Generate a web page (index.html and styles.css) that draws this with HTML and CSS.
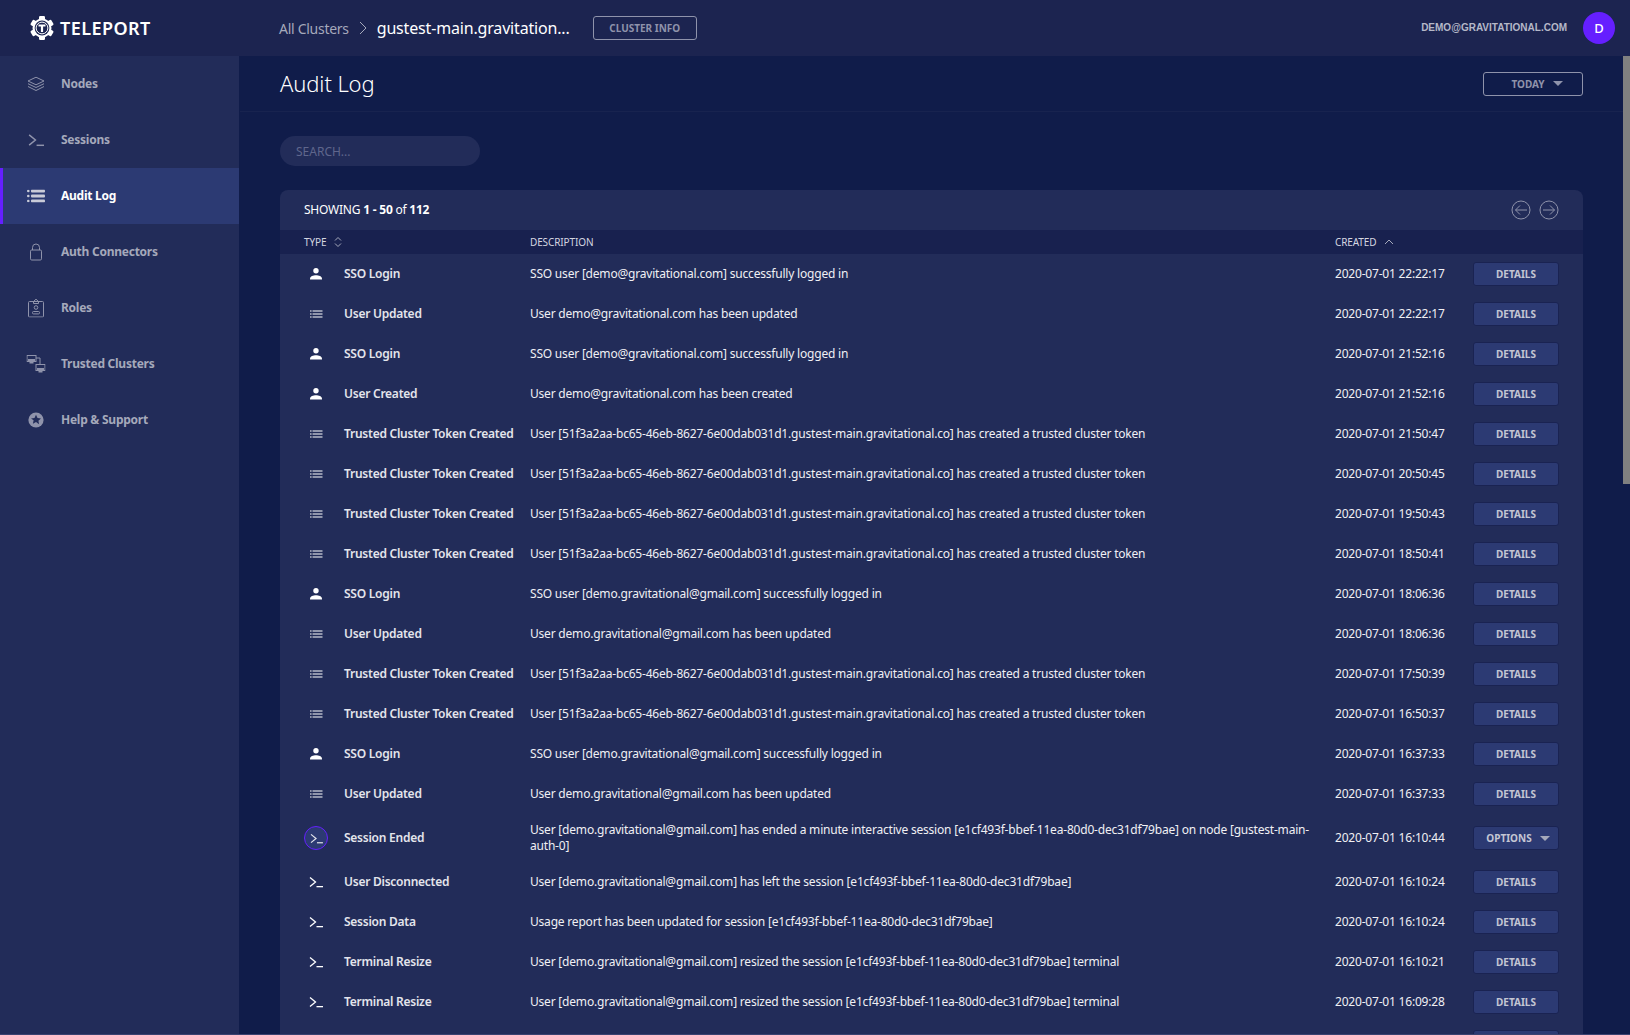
FILE: index.html
```html
<!DOCTYPE html>
<html lang="en">
<head>
<meta charset="utf-8">
<title>Audit Log</title>
<link rel="stylesheet" href="styles.css">
</head>
<body>
<svg class="defs" width="0" height="0" aria-hidden="true">
  <symbol id="i-user" viewBox="0 0 14 14"><circle cx="7" cy="3.8" r="2.7" fill="currentColor"/><path d="M1 12.500v-1C1 9.400 4.400 8.200 7 8.200s6 1.200 6 3.300v1z" fill="currentColor"/></symbol>
  <symbol id="i-list" viewBox="0 0 14 14"><g fill="currentColor"><rect x="1" y="3.500" width="1.600" height="1"/><rect x="3.500" y="3.500" width="10" height="1"/><rect x="1" y="6.500" width="1.600" height="1"/><rect x="3.500" y="6.500" width="10" height="1"/><rect x="1" y="9.500" width="1.600" height="1"/><rect x="3.500" y="9.500" width="10" height="1"/></g></symbol>
  <symbol id="i-term" viewBox="0 0 14 12"><path d="M1 1.500 L6.500 6 L1 10.500" fill="none" stroke="currentColor" stroke-width="1.300"/><rect x="7.500" y="10" width="6.500" height="1.300" fill="currentColor"/></symbol>
</svg>

<header class="topbar">
  <div class="brand">
    <svg class="logo" viewBox="0 0 24 24" width="24" height="24">
      <g fill="#fff">
        <circle cx="12" cy="12" r="9.500"/>
        <rect x="9" y="0" width="6" height="24" rx="1.200"/>
        <rect x="9" y="0" width="6" height="24" rx="1.200" transform="rotate(60 12 12)"/>
        <rect x="9" y="0" width="6" height="24" rx="1.200" transform="rotate(120 12 12)"/>
      </g>
      <circle cx="12" cy="12" r="7.400" fill="#1c2450"/>
      <circle cx="12" cy="12" r="5.900" fill="none" stroke="#fff" stroke-width="1"/>
      <path fill="#fff" d="M8.500 8.500h7v2h-2.400V16h-2.200v-5.500H8.500z"/>
    </svg>
    <span class="brand-name">TELEPORT</span>
  </div>
  <div class="crumbs">
    <span class="crumb-root">All Clusters</span>
    <svg class="crumb-sep" viewBox="0 0 8 14" width="8" height="14"><path d="M1 1l6 6-6 6" fill="none" stroke="currentColor" stroke-width="1"/></svg>
    <span class="crumb-current">gustest-main.gravitation...</span>
    <button class="btn-outline btn-cluster">CLUSTER INFO</button>
  </div>
  <div class="account">
    <span class="account-mail">DEMO@GRAVITATIONAL.COM</span>
    <span class="avatar">D</span>
  </div>
</header>

<div class="shell">
  <nav class="sidebar">
    <a class="nav-item"><svg class="nav-icon" viewBox="0 0 18 15" width="18" height="15"><g fill="none" stroke="currentColor" stroke-width="1"><path d="M9 .7l8 3.800-8 3.800-8-3.800z"/><path d="M1 7.200l8 3.800 8-3.800"/><path d="M1 10l8 4 8-4"/></g></svg><span>Nodes</span></a>
    <a class="nav-item"><svg class="nav-icon" viewBox="0 0 14 12" width="16" height="14"><use href="#i-term"/></svg><span>Sessions</span></a>
    <a class="nav-item active"><svg class="nav-icon" viewBox="0 0 18 13" width="18" height="13"><g fill="currentColor"><circle cx="1.300" cy="1.500" r="1.300"/><rect x="4" y="0" width="14" height="3" rx="1"/><circle cx="1.300" cy="6.500" r="1.300"/><rect x="4" y="5" width="14" height="3" rx="1"/><circle cx="1.300" cy="11.500" r="1.300"/><rect x="4" y="10" width="14" height="3" rx="1"/></g></svg><span>Audit Log</span></a>
    <a class="nav-item"><svg class="nav-icon" viewBox="0 0 14 18" width="14" height="18"><g fill="none" stroke="currentColor" stroke-width="1"><rect x="1.500" y="7" width="11" height="10" rx="1.200"/><path d="M3.500 7V4.500a3.500 3.500 0 0 1 7 0V7"/></g></svg><span>Auth Connectors</span></a>
    <a class="nav-item"><svg class="nav-icon" viewBox="0 0 16 19" width="16" height="19"><g fill="none" stroke="currentColor" stroke-width="1"><rect x=".5" y="3" width="15" height="15.500" rx="1"/><path d="M5.500 3L8 .7 10.500 3v2h-5z"/><circle cx="8" cy="9" r="1.800"/><rect x="4.500" y="13" width="7" height="2.400" rx="1"/></g></svg><span>Roles</span></a>
    <a class="nav-item"><svg class="nav-icon" viewBox="0 0 19 18" width="19" height="18"><g fill="none" stroke="currentColor" stroke-width="1"><rect x=".5" y=".5" width="9" height="6"/><rect x="9.500" y="9.500" width="9" height="6"/><path d="M9.500 3h4v6.500"/></g><g fill="currentColor"><rect x="1.500" y="4" width="7" height="2.500"/><rect x="3" y="7" width="4" height="1.500"/><rect x="10.500" y="13" width="7" height="2.500"/><rect x="12" y="16" width="4" height="1.500"/></g></svg><span>Trusted Clusters</span></a>
    <a class="nav-item"><svg class="nav-icon" viewBox="0 0 16 16" width="16" height="16"><circle cx="8" cy="8" r="7.600" fill="currentColor"/><path d="M8 2.800l1.500 3.200 3.500.4-2.600 2.400.7 3.500L8 10.100l-3.100 1.700.7-3.500L3 6.400l3.500-.4z" fill="#222c59"/></svg><span>Help &amp; Support</span></a>
  </nav>

  <main class="content">
    <div class="page-head">
      <h1>Audit Log</h1>
      <button class="btn-outline btn-range">TODAY<span class="caret"></span></button>
    </div>
    <div class="page-body">
      <div class="search">SEARCH...</div>
      <section class="panel">
        <div class="panel-head">
          <div>SHOWING <b>1 - 50</b> of <b>112</b></div>
          <div class="pager">
            <svg viewBox="0 0 20 20" width="20" height="20"><g fill="none" stroke="currentColor"><circle cx="10" cy="10" r="9"/><path d="M16 10H4.500M9 5.500L4.500 10 9 14.500"/></g></svg>
            <svg viewBox="0 0 20 20" width="20" height="20"><g fill="none" stroke="currentColor"><circle cx="10" cy="10" r="9"/><path d="M4 10h11.500M11 5.500l4.500 4.500-4.500 4.500"/></g></svg>
          </div>
        </div>
        <div class="row row-head">
          <div class="col-type"><span>TYPE</span><svg class="sort" viewBox="0 0 8 12" width="8" height="12"><path d="M1 4.500L4 1.500l3 3M1 7.500l3 3 3-3" fill="none" stroke="currentColor"/></svg></div>
          <div class="col-desc">DESCRIPTION</div>
          <div class="col-date"><span>CREATED</span><svg class="sort-up" viewBox="0 0 10 6" width="10" height="6"><path d="M1 5l4-4 4 4" fill="none" stroke="currentColor"/></svg></div>
        </div>
        <div class="row"><div class="col-type"><svg class="ev"><use href="#i-user"/></svg><b>SSO Login</b></div><div class="col-desc">SSO user [demo@gravitational.com] successfully logged in</div><div class="col-date">2020-07-01 22:22:17</div><button class="btn-details">DETAILS</button></div>
        <div class="row"><div class="col-type"><svg class="ev"><use href="#i-list"/></svg><b>User Updated</b></div><div class="col-desc">User demo@gravitational.com has been updated</div><div class="col-date">2020-07-01 22:22:17</div><button class="btn-details">DETAILS</button></div>
        <div class="row"><div class="col-type"><svg class="ev"><use href="#i-user"/></svg><b>SSO Login</b></div><div class="col-desc">SSO user [demo@gravitational.com] successfully logged in</div><div class="col-date">2020-07-01 21:52:16</div><button class="btn-details">DETAILS</button></div>
        <div class="row"><div class="col-type"><svg class="ev"><use href="#i-user"/></svg><b>User Created</b></div><div class="col-desc">User demo@gravitational.com has been created</div><div class="col-date">2020-07-01 21:52:16</div><button class="btn-details">DETAILS</button></div>
        <div class="row"><div class="col-type"><svg class="ev"><use href="#i-list"/></svg><b>Trusted Cluster Token Created</b></div><div class="col-desc">User [51f3a2aa-bc65-46eb-8627-6e00dab031d1.gustest-main.gravitational.co] has created a trusted cluster token</div><div class="col-date">2020-07-01 21:50:47</div><button class="btn-details">DETAILS</button></div>
        <div class="row"><div class="col-type"><svg class="ev"><use href="#i-list"/></svg><b>Trusted Cluster Token Created</b></div><div class="col-desc">User [51f3a2aa-bc65-46eb-8627-6e00dab031d1.gustest-main.gravitational.co] has created a trusted cluster token</div><div class="col-date">2020-07-01 20:50:45</div><button class="btn-details">DETAILS</button></div>
        <div class="row"><div class="col-type"><svg class="ev"><use href="#i-list"/></svg><b>Trusted Cluster Token Created</b></div><div class="col-desc">User [51f3a2aa-bc65-46eb-8627-6e00dab031d1.gustest-main.gravitational.co] has created a trusted cluster token</div><div class="col-date">2020-07-01 19:50:43</div><button class="btn-details">DETAILS</button></div>
        <div class="row"><div class="col-type"><svg class="ev"><use href="#i-list"/></svg><b>Trusted Cluster Token Created</b></div><div class="col-desc">User [51f3a2aa-bc65-46eb-8627-6e00dab031d1.gustest-main.gravitational.co] has created a trusted cluster token</div><div class="col-date">2020-07-01 18:50:41</div><button class="btn-details">DETAILS</button></div>
        <div class="row"><div class="col-type"><svg class="ev"><use href="#i-user"/></svg><b>SSO Login</b></div><div class="col-desc">SSO user [demo.gravitational@gmail.com] successfully logged in</div><div class="col-date">2020-07-01 18:06:36</div><button class="btn-details">DETAILS</button></div>
        <div class="row"><div class="col-type"><svg class="ev"><use href="#i-list"/></svg><b>User Updated</b></div><div class="col-desc">User demo.gravitational@gmail.com has been updated</div><div class="col-date">2020-07-01 18:06:36</div><button class="btn-details">DETAILS</button></div>
        <div class="row"><div class="col-type"><svg class="ev"><use href="#i-list"/></svg><b>Trusted Cluster Token Created</b></div><div class="col-desc">User [51f3a2aa-bc65-46eb-8627-6e00dab031d1.gustest-main.gravitational.co] has created a trusted cluster token</div><div class="col-date">2020-07-01 17:50:39</div><button class="btn-details">DETAILS</button></div>
        <div class="row"><div class="col-type"><svg class="ev"><use href="#i-list"/></svg><b>Trusted Cluster Token Created</b></div><div class="col-desc">User [51f3a2aa-bc65-46eb-8627-6e00dab031d1.gustest-main.gravitational.co] has created a trusted cluster token</div><div class="col-date">2020-07-01 16:50:37</div><button class="btn-details">DETAILS</button></div>
        <div class="row"><div class="col-type"><svg class="ev"><use href="#i-user"/></svg><b>SSO Login</b></div><div class="col-desc">SSO user [demo.gravitational@gmail.com] successfully logged in</div><div class="col-date">2020-07-01 16:37:33</div><button class="btn-details">DETAILS</button></div>
        <div class="row"><div class="col-type"><svg class="ev"><use href="#i-list"/></svg><b>User Updated</b></div><div class="col-desc">User demo.gravitational@gmail.com has been updated</div><div class="col-date">2020-07-01 16:37:33</div><button class="btn-details">DETAILS</button></div>
        <div class="row row-tall"><div class="col-type"><span class="ev-ring"><svg class="ev-small"><use href="#i-term"/></svg></span><b>Session Ended</b></div><div class="col-desc">User [demo.gravitational@gmail.com] has ended a minute interactive session [e1cf493f-bbef-11ea-80d0-dec31df79bae] on node [gustest-main-auth-0]</div><div class="col-date">2020-07-01 16:10:44</div><button class="btn-details btn-options">OPTIONS<span class="caret"></span></button></div>
        <div class="row"><div class="col-type"><svg class="ev"><use href="#i-term"/></svg><b>User Disconnected</b></div><div class="col-desc">User [demo.gravitational@gmail.com] has left the session [e1cf493f-bbef-11ea-80d0-dec31df79bae]</div><div class="col-date">2020-07-01 16:10:24</div><button class="btn-details">DETAILS</button></div>
        <div class="row"><div class="col-type"><svg class="ev"><use href="#i-term"/></svg><b>Session Data</b></div><div class="col-desc">Usage report has been updated for session [e1cf493f-bbef-11ea-80d0-dec31df79bae]</div><div class="col-date">2020-07-01 16:10:24</div><button class="btn-details">DETAILS</button></div>
        <div class="row"><div class="col-type"><svg class="ev"><use href="#i-term"/></svg><b>Terminal Resize</b></div><div class="col-desc">User [demo.gravitational@gmail.com] resized the session [e1cf493f-bbef-11ea-80d0-dec31df79bae] terminal</div><div class="col-date">2020-07-01 16:10:21</div><button class="btn-details">DETAILS</button></div>
        <div class="row"><div class="col-type"><svg class="ev"><use href="#i-term"/></svg><b>Terminal Resize</b></div><div class="col-desc">User [demo.gravitational@gmail.com] resized the session [e1cf493f-bbef-11ea-80d0-dec31df79bae] terminal</div><div class="col-date">2020-07-01 16:09:28</div><button class="btn-details">DETAILS</button></div>
        <div class="row"><div class="col-type"></div><div class="col-desc"></div><div class="col-date"></div><button class="btn-details" aria-label="Details"></button></div>
      </section>
    </div>
  </main>
  <div class="scrollbar"><div class="thumb"></div></div>
</div>
</body>
</html>
```

FILE: styles.css
```css
* { box-sizing: border-box; }
html, body { margin: 0; height: 100%; overflow: hidden; }
body {
  background: #101c4a;
  color: #fff;
  font-family: "Noto Sans", "Open Sans", sans-serif;
  font-size: 12px;
}
body::after { content: ""; position: fixed; left: 0; right: 0; bottom: 0; height: 1px; background: #3a4270; }
.defs { position: absolute; }
button { font-family: inherit; cursor: pointer; }

.topbar { height: 56px; background: #1c2450; display: flex; align-items: center; }
.brand { width: 279px; padding-left: 30px; display: flex; align-items: center; gap: 6px; flex: none; }
.brand-name { font-size: 18px; font-weight: 600; letter-spacing: .45px; }
.crumbs { display: flex; align-items: center; flex: 1; }
.crumb-root { font-size: 14px; color: #a5a9bb; letter-spacing: -.28px; }
.crumb-sep { color: #a5a9bb; margin: 0 10px; }
.crumb-current { font-size: 16px; color: #fff; width: 194px; white-space: nowrap; letter-spacing: -.17px; }
.btn-outline { background: transparent; border: 1px solid #8f93ab; border-radius: 3px; color: #8f93ab; font-size: 10px; font-weight: 700; }
.btn-cluster { width: 104px; height: 24px; margin-left: 22px; padding: 0; }
.account { display: flex; align-items: center; gap: 16px; padding-right: 15px; }
.account-mail { font-family: "Liberation Sans", sans-serif; font-size: 10px; font-weight: 700; color: #b5b8c8; padding-bottom: 1px; }
.avatar { width: 32px; height: 32px; border-radius: 50%; background: #651fff; display: flex; align-items: center; justify-content: center; font-size: 13px; font-weight: 500; }

.shell { display: flex; height: 979px; }
.sidebar { width: 239px; flex: none; background: #222c59; display: flex; flex-direction: column; }
.nav-item { height: 56px; display: flex; align-items: center; position: relative; padding: 0 0 2px 61px; font-size: 12px; font-weight: 700; color: #a5a9bb; letter-spacing: -.25px; }
.nav-icon { position: absolute; left: 36px; top: 50%; transform: translate(-50%, -50%); color: #8f93ab; }
.nav-item.active { background: #2c3a73; color: #fff; border-left: 3px solid #651fff; padding-left: 58px; }
.nav-item.active .nav-icon { left: 33px; color: #c9cbd8; }

.content { flex: 1; min-width: 0; padding-left: 1px; }
.page-head { height: 56px; padding: 0 40px; border-bottom: 1px solid #18234f; display: flex; align-items: center; justify-content: space-between; }
h1 { margin: 0 0 2px; font-size: 22px; font-weight: 300; letter-spacing: -.1px; }
.btn-range { width: 100px; height: 24px; display: flex; align-items: center; justify-content: center; gap: 8px; padding: 0 0 0 8px; }
.caret { display: inline-block; border: 5px solid transparent; border-top-color: currentColor; border-bottom-width: 0; }
.page-body { padding: 24px 40px 0; }
.search { width: 200px; height: 30px; border-radius: 15px; background: #222c59; color: #5f668c; font-size: 12px; padding: 1px 16px 0; line-height: 30px; }

.panel { margin-top: 24px; background: #222c59; border-radius: 8px 8px 0 0; }
.panel-head { height: 40px; padding: 0 24px 2px; display: flex; align-items: center; justify-content: space-between; font-size: 12px; letter-spacing: -.22px; }
.panel-head b { font-weight: 700; }
.pager { display: flex; gap: 8px; color: #8f93ab; padding-top: 2px; }
.row { display: flex; align-items: center; height: 40px; padding-left: 24px; font-size: 12px; line-height: 16px; letter-spacing: -.2px; color: #f0f0f4; }
.row-tall { height: 48px; }
.row-head { height: 24px; background: #18214f; font-size: 10px; color: #d4d6e0; letter-spacing: -.12px; padding-bottom: 1px; }
.col-type { width: 226px; flex: none; display: flex; align-items: center; }
.col-type b { font-weight: 600; color: #e4e5ec; letter-spacing: -.25px; white-space: nowrap; }
.col-desc { flex: 1; min-width: 0; padding-right: 20px; }
.col-date { width: 138px; flex: none; display: flex; align-items: center; }
.row-head .col-desc { padding: 0; }
.row-head .col-date { margin-right: 110px; }
.sort { margin-left: 8px; color: #a5a9bb; }
.sort-up { margin-left: 8px; color: #a5a9bb; }
.ev { width: 14px; height: 14px; margin: 0 21px 0 5px; flex: none; color: #fff; }
.ev-ring { width: 24px; height: 24px; border-radius: 50%; border: 1.5px solid #651fff; background: #2c3a73; margin-right: 16px; display: flex; align-items: center; justify-content: center; color: #e4e5ec; flex: none; }
.ev-small { width: 13px; height: 11px; }
.btn-details { width: 86px; height: 24px; margin-right: 24px; flex: none; padding: 0; background: #2c3a73; border: 1px solid #1a2352; border-radius: 3px; color: #c4c6d3; font-size: 10px; font-weight: 700; display: flex; align-items: center; justify-content: center; }
.btn-options { gap: 8px; padding-left: 4px; }
.btn-options .caret { color: #a5a9bb; }

.scrollbar { width: 7px; flex: none; }
.thumb { height: 428px; background: #808080; }
```
